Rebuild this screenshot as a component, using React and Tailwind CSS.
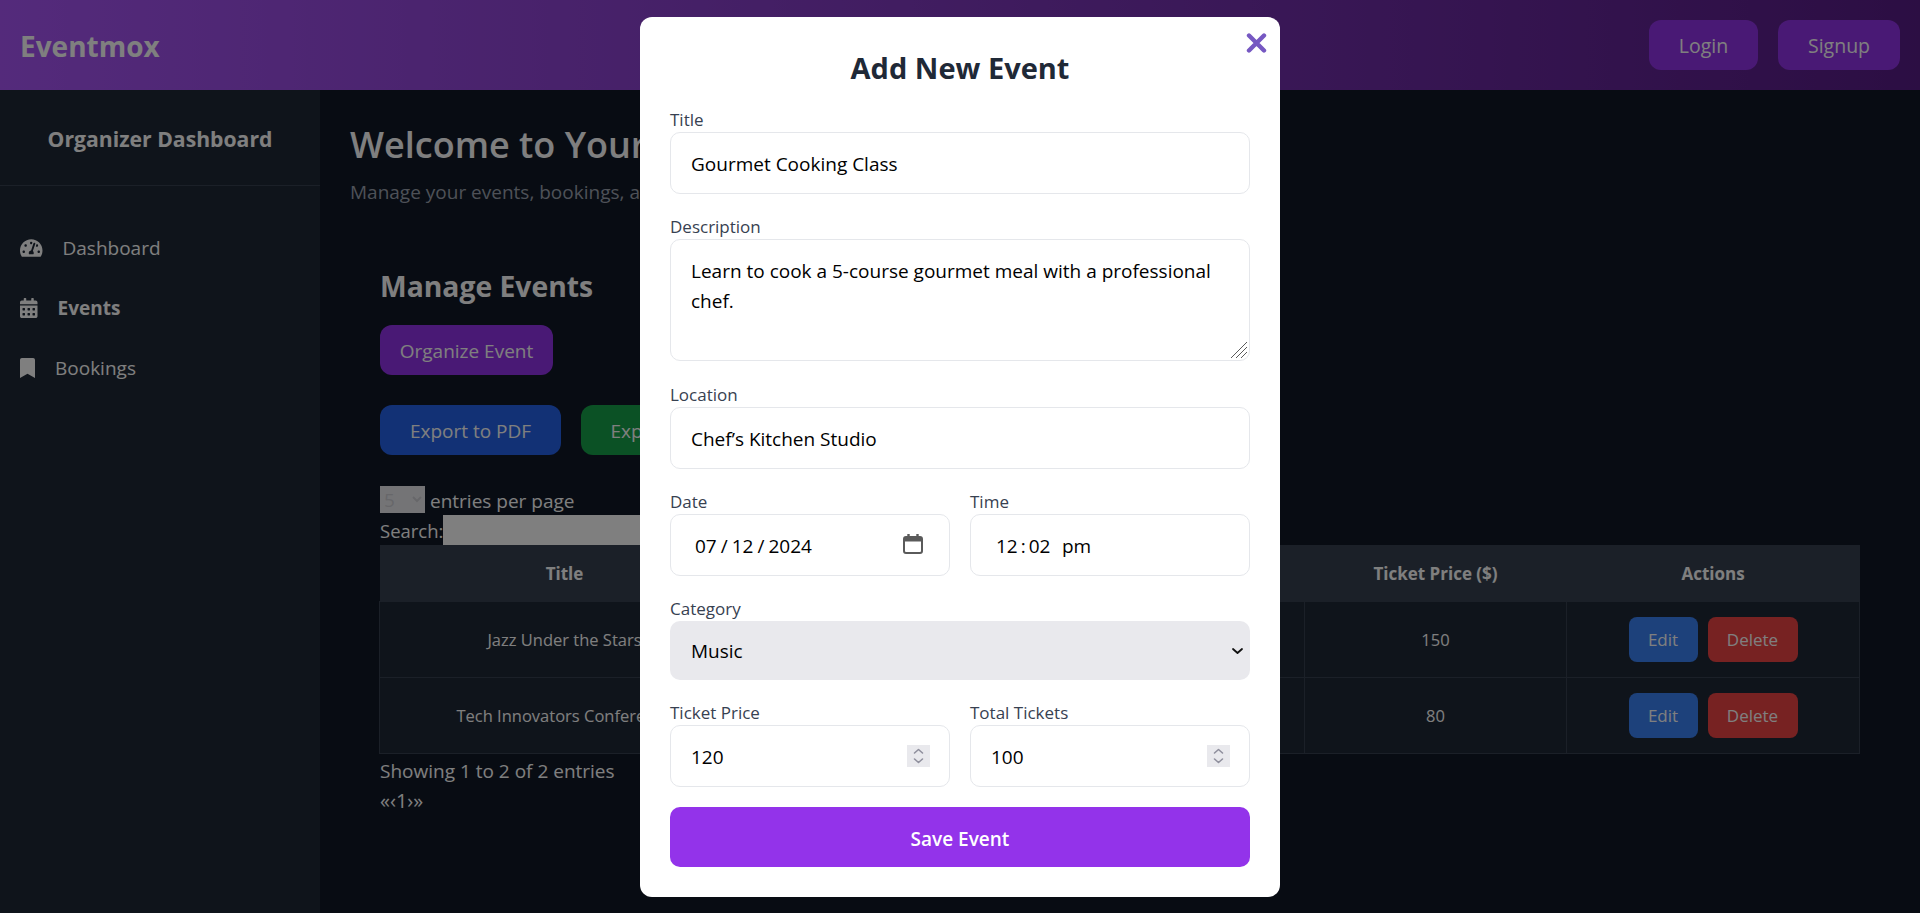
import React from "react";
import { FaTachometerAlt, FaCalendarAlt, FaBookmark } from "react-icons/fa";

function Row({ title, date, location, category, price }) {
  return (
    <tr>
      <td className="border border-[#374151] p-[15px] pt-[17px] text-[16.5px]">{title}</td>
      <td className="border border-[#374151] p-[15px] pt-[17px] text-[16.5px]">{date}</td>
      <td className="border border-[#374151] p-[15px] pt-[17px] text-[16.5px]">{location}</td>
      <td className="border border-[#374151] p-[15px] pt-[17px] text-[16.5px]">{category}</td>
      <td className="border border-[#374151] p-[15px] pt-[17px] text-[16.5px]">{price}</td>
      <td className="border border-[#374151] p-[15px]">
        <div className="flex justify-center gap-[10px]">
          <button className="h-[45px] w-[69px] rounded-lg bg-[#3b82f6] pt-[2px] text-white">Edit</button>
          <button className="h-[45px] w-[90px] rounded-lg bg-[#ef4444] pt-[2px] text-white">Delete</button>
        </div>
      </td>
    </tr>
  );
}

function Field({ label, children }) {
  return (
    <div className="flex flex-col">
      <label className="h-[22px] text-[17px] leading-[20px] font-medium text-[#374151]">{label}</label>
      {children}
    </div>
  );
}

const inputCls =
  "h-[62px] w-full rounded-[10px] border border-[#e5e7eb] bg-white px-5 pt-[2px] text-[19px] text-black outline-none";

function NumberField({ label, value }) {
  return (
    <Field label={label}>
      <div className="relative">
        <input
          type="number"
          className={inputCls + " appearance-none [&::-webkit-inner-spin-button]:hidden [&::-webkit-outer-spin-button]:hidden"}
          defaultValue={value}
        />
        <svg className="absolute top-[20px] right-[20px] h-[22px] w-[23px]" viewBox="0 0 23 22" fill="none">
          <rect width="23" height="22" fill="#e9e9ed" />
          <path d="M7.5 8 11.5 4.5 15.5 8M7.5 14 11.5 17.5 15.5 14" stroke="#8f8f9d" strokeWidth="1.6" strokeLinecap="round" strokeLinejoin="round" />
        </svg>
      </div>
    </Field>
  );
}

export default function App() {
  return (
    <div className="relative flex h-[913px] flex-col overflow-hidden bg-[#111827] font-['Open_Sans',sans-serif] text-white">
      <header className="flex h-[90px] shrink-0 items-center justify-between bg-linear-to-r/srgb from-[#a855f7] to-[#581c87] px-5">
        <div className="pt-[2px] text-[28px] font-bold">Eventmox</div>
        <div className="flex gap-5">
          <button className="h-[50px] w-[109px] rounded-xl bg-[#9333ea] pt-[1px] text-[19.5px]">Login</button>
          <button className="h-[50px] w-[122px] rounded-xl bg-[#9333ea] pt-[1px] text-[19.5px]">Signup</button>
        </div>
      </header>
      <div className="flex flex-1">
        <aside className="w-[320px] shrink-0 bg-[#1f2937]">
          <div className="flex h-[96px] items-center justify-center border-b border-[#374151] pt-[2px] text-[21.2px] font-bold">
            Organizer Dashboard
          </div>
          <nav className="flex flex-col gap-[26px] px-5 pt-[45px] text-[19px]">
            <a className="flex h-[34px] items-center gap-5"><FaTachometerAlt className="h-5 w-[22.5px] shrink-0" />Dashboard</a>
            <a className="flex h-[34px] items-center gap-5 font-bold"><FaCalendarAlt className="h-5 w-[17.5px] shrink-0" />Events</a>
            <a className="flex h-[34px] items-center gap-5"><FaBookmark className="h-5 w-[15px] shrink-0" />Bookings</a>
          </nav>
        </aside>
        <main className="flex-1 px-[30px] pt-[30px]">
          <h1 className="text-[36px] leading-[50px] font-semibold">Welcome to Your Dashboard</h1>
          <p className="mt-[10px] text-[19px] leading-[24px] text-[#9ca3af]">Manage your events, bookings, and more.</p>
          <section className="px-[30px] pt-[62px]">
            <h2 className="text-[28.3px] leading-[40px] font-bold">Manage Events</h2>
            <button className="mt-[19px] block h-[50px] w-[173px] rounded-xl bg-[#9333ea] pt-[2px] text-[19px]">Organize Event</button>
            <div className="mt-[30px] flex gap-5">
              <button className="h-[50px] w-[181px] rounded-xl bg-[#2563eb] pt-[2px] text-[19px]">Export to PDF</button>
              <button className="h-[50px] w-[190px] rounded-xl bg-[#16a34a] pt-[2px] text-[19px]">Export to Excel</button>
            </div>
            <div className="mt-[31px] flex h-[29px] items-start text-[19px]">
              <select className="mr-[5px] h-[27px] w-[45px] bg-[#e9e9ed] text-[19px] text-[#cfcfd4]" defaultValue="5"><option>5</option></select>
              <span className="leading-[31px]">entries per page</span>
            </div>
            <div className="flex h-[30px] items-center text-[18.5px]">
              <span className="w-[63px] shrink-0 pt-[2px]">Search:</span>
              <input className="h-[30px] w-[250px] bg-white" />
            </div>
            <table className="-ml-[1px] w-[1480px] table-fixed border-collapse text-center text-[17px]">
              <colgroup>
                <col className="w-[370px]" />
                <col className="w-[185px]" />
                <col className="w-[185px]" />
                <col className="w-[185px]" />
                <col className="w-[262px]" />
                <col className="w-[293px]" />
              </colgroup>
              <thead className="bg-[#374151]">
                <tr className="h-[56px] font-bold">
                  <th className="pt-[2px]">Title</th>
                  <th className="pt-[2px]">Date</th>
                  <th className="pt-[2px]">Location</th>
                  <th className="pt-[2px]">Category</th>
                  <th className="pt-[2px]">Ticket Price ($)</th>
                  <th className="pt-[2px]">Actions</th>
                </tr>
              </thead>
              <tbody className="bg-[#1f2937]">
                <Row title="Jazz Under the Stars" date="2024-08-15" location="Blue Note" category="Music" price="150" />
                <Row title="Tech Innovators Conference" date="2024-09-20" location="Convention Hall" category="Technology" price="80" />
              </tbody>
            </table>
            <div className="mt-[3px] h-[28px] text-[19px] leading-[28px]">Showing 1 to 2 of 2 entries</div>
            <div className="mt-[2px] h-[28px] text-[20px] leading-[28px]">«‹1›»</div>
          </section>
        </main>
      </div>

      <div className="fixed inset-0 flex items-start justify-center bg-black/50">
        <div className="relative mt-[17px] h-[880px] w-[640px] rounded-xl bg-white px-[30px] pt-[30px]">
          <svg className="absolute top-[16px] right-[13px] h-[20px] w-[21px]" viewBox="0 0 21 20" fill="none">
            <path d="M3 2.5 18 17.5M18 2.5 3 17.5" stroke="#7658c2" strokeWidth="4.4" strokeLinecap="round" />
          </svg>
          <h2 className="-mt-[1px] h-[44px] text-center text-[29px] leading-[44px] font-bold text-[#1f2937]">Add New Event</h2>
          <div className="mt-[20px] flex flex-col">
            <Field label="Title">
              <input className={inputCls} defaultValue="Gourmet Cooking Class" />
            </Field>
            <div className="mt-[23px]">
              <Field label="Description">
                <div className="relative">
                  <textarea className="block h-[122px] w-full resize-none rounded-[10px] border border-[#e5e7eb] bg-white px-5 pt-[16px] text-[19px] leading-[30px] text-black outline-none" defaultValue="Learn to cook a 5-course gourmet meal with a professional chef." />
                  <svg className="absolute right-[2px] bottom-[2px] h-[18px] w-[18px]" viewBox="0 0 18 18" fill="none">
                    <path d="M1 17 17 1M6 17 17 6M11 17 17 11" stroke="#5a5a5a" strokeWidth="1" />
                  </svg>
                </div>
              </Field>
            </div>
            <div className="mt-[24px]">
              <Field label="Location">
                <input className={inputCls} defaultValue="Chef’s Kitchen Studio" />
              </Field>
            </div>
            <div className="mt-[23px] grid grid-cols-2 gap-5">
              <Field label="Date">
                <div className="relative">
                  <input
                    type="date"
                    className={inputCls + " [&::-webkit-calendar-picker-indicator]:opacity-0 [&::-webkit-datetime-edit]:pl-[3px] [&::-webkit-datetime-edit-text]:px-[3px]"}
                    defaultValue="2024-07-12"
                  />
                  <svg className="absolute top-[20px] right-[27px] h-[20px] w-[20px]" viewBox="0 0 20 20" fill="none">
                    <path d="M5.5 0v4M14.5 0v4" stroke="#5a5a5a" strokeWidth="2.4" />
                    <rect x="1" y="3" width="18" height="16" rx="2" stroke="#5a5a5a" strokeWidth="2" />
                    <path d="M1 5.5h18" stroke="#5a5a5a" strokeWidth="4" />
                  </svg>
                </div>
              </Field>
              <Field label="Time">
                <input
                  type="time"
                  className={inputCls + " [&::-webkit-calendar-picker-indicator]:hidden [&::-webkit-datetime-edit]:pl-[4px] [&::-webkit-datetime-edit-text]:px-[2px] [&::-webkit-datetime-edit-ampm-field]:ml-[3px] [&::-webkit-datetime-edit-ampm-field]:lowercase"}
                  defaultValue="12:02"
                />
              </Field>
            </div>
            <div className="mt-[23px]">
              <Field label="Category">
                <div className="relative">
                  <select className="block h-[59px] w-full appearance-none rounded-[10px] bg-[#e9e9ed] px-[21px] pt-[2px] text-[19px] text-black outline-none" defaultValue="Music"><option>Music</option></select>
                  <svg className="absolute top-[27px] right-[7px] h-[6px] w-[11px]" viewBox="0 0 11 6" fill="none">
                    <path d="M1 1 5.5 5 10 1" stroke="#111" strokeWidth="1.8" strokeLinecap="round" strokeLinejoin="round" />
                  </svg>
                </div>
              </Field>
            </div>
            <div className="mt-[23px] grid grid-cols-2 gap-5">
              <NumberField label="Ticket Price" value="120" />
              <NumberField label="Total Tickets" value="100" />
            </div>
            <button className="mt-[20px] h-[60px] w-full rounded-[10px] bg-[#9333ea] pt-[4px] text-[19px] font-semibold text-white">Save Event</button>
          </div>
        </div>
      </div>
    </div>
  );
}
